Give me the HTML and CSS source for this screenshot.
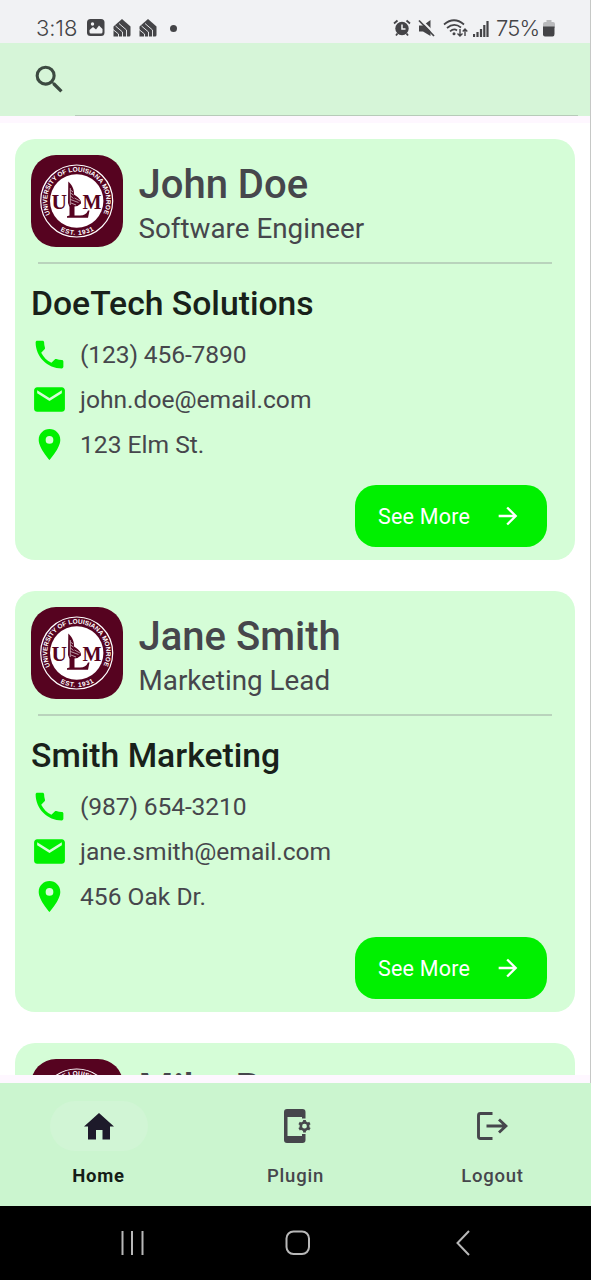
FILE: index.html
```html
<!DOCTYPE html>
<html lang="en">
<head>
<meta charset="utf-8">
<title>Contacts</title>
<link rel="stylesheet" href="styles.css">
</head>
<body>
<svg class="defs" width="0" height="0" aria-hidden="true">
  <symbol id="phone" viewBox="0 0 24 24"><path d="M6.62 10.79c1.44 2.83 3.76 5.14 6.59 6.59l2.2-2.2c.27-.27.67-.36 1.02-.24 1.12.37 2.33.57 3.57.57.55 0 1 .45 1 1V20c0 .55-.45 1-1 1-9.39 0-17-7.61-17-17 0-.55.45-1 1-1h3.500c.55 0 1 .45 1 1 0 1.250.2 2.450.57 3.570.11.35.03.74-.25 1.020l-2.200 2.200z"/></symbol>
  <symbol id="mail" viewBox="0 0 24 24"><path d="M20 4H4c-1.100 0-1.990.9-1.990 2L2 18c0 1.100.9 2 2 2h16c1.100 0 2-.9 2-2V6c0-1.100-.9-2-2-2zm0 4l-8 5-8-5V6l8 5 8-5v2z"/></symbol>
  <symbol id="pin" viewBox="0 0 24 24"><path d="M12 2C8.130 2 5 5.130 5 9c0 5.250 7 13 7 13s7-7.750 7-13c0-3.870-3.130-7-7-7zm0 9.500a2.500 2.500 0 0 1 0-5 2.500 2.500 0 0 1 0 5z"/></symbol>
  <symbol id="arrow" viewBox="0 0 24 24"><path d="M12 4l-1.410 1.410L16.170 11H4v2h12.170l-5.580 5.590L12 20l8-8z"/></symbol>
  <symbol id="tagged-house" viewBox="0 0 18 18"><path fill="#444447" d="M.5 7.500 9 0l8.500 7.500V16q0 1.500-1.500 1.500H.5z"/><path d="M6 4.500 13.500 11v7M2.500 7 9.500 13v5M0 10.500 5.500 15v3" fill="none" stroke="#f1f2f4" stroke-width=".9"/></symbol>
  <symbol id="seal" viewBox="0 0 92 92">
    <rect width="92" height="92" rx="25" fill="#560320"/>
    <circle cx="45.700" cy="46" r="36" fill="none" stroke="#fff" stroke-width="1.200"/>
    <circle cx="45.700" cy="46" r="26.700" fill="#fff"/>
    <path id="arc-top" fill="none" d="M19.400 59.400A29.500 29.500 0 1 1 72 59.400"/>
    <path id="arc-bottom" fill="none" d="M27.500 74.700A34 34 0 0 0 63.900 74.700"/>
    <text class="seal-ring"><textPath href="#arc-top" textLength="119">UNIVERSITY OF LOUISIANA MONROE</textPath></text>
    <text class="seal-ring"><textPath href="#arc-bottom" startOffset="2" textLength="35">EST. 1931</textPath></text>
    <text class="seal-letter" x="20.500" y="53.700" textLength="15.500" lengthAdjust="spacingAndGlyphs">U</text>
    <text class="seal-letter" x="51.500" y="53.700" textLength="19" lengthAdjust="spacingAndGlyphs">M</text>
    <path fill="#560320" d="M37.300 26.500C41.500 30 43.300 35 43 39.500C47 42 50.500 45 50 48.500L46.500 51L43.500 51.500V60.500H49Q55 60.500 57 55.500H58.500L57 62.700H36V61.200L38.500 60.500V52L37 48Z"/>
    <path d="M39.300 33V50M39.500 35l2.500 2M39.500 38l3 2M39.500 41l3 2.500M39.500 44.500l8 3M43.500 43l5.500 3M40 48l5 2" fill="none" stroke="#fff" stroke-width=".6"/>
  </symbol>
</svg>

<div class="screen">
  <header class="status">
    <div class="status-left">
      <span class="clock">3:18</span>
      <svg width="18" height="18" viewBox="0 0 18 18"><rect width="17.500" height="17" rx="3.500" fill="#444447"/><path d="M2.500 13V11L6 8l3 2.500 3-4 3.500 3.500V13q0 1.500-1.500 1.500H4q-1.500 0-1.500-1.500z" fill="#f1f2f4"/><circle cx="5.500" cy="5" r="1.700" fill="#f1f2f4"/></svg>
      <svg class="house-a" width="18" height="18"><use href="#tagged-house"/></svg>
      <svg class="house-b" width="18" height="18"><use href="#tagged-house"/></svg>
      <i class="dot"></i>
    </div>
    <div class="status-right">
      <svg class="alarm" width="18" height="18" viewBox="0 0 18 18"><circle cx="9" cy="9.500" r="6.700" fill="#444447"/><path d="M1 4.500 4.500 1.500M17 4.500 13.500 1.500M4.500 14.500l-1.500 2M13.500 14.500l1.500 2" stroke="#444447" stroke-width="1.800" fill="none"/><path d="M9 5.500V10h3.500" fill="none" stroke="#f1f2f4" stroke-width="1.500"/></svg>
      <svg class="mute" width="18" height="18" viewBox="0 0 18 18"><path d="M1 6.500h4L12.500 1v16L5 12.500H1z" fill="#444447"/><path d="M3 1 18 16" stroke="#f1f2f4" stroke-width="2"/><path d="M1 1.500 16 17" stroke="#444447" stroke-width="1.700"/></svg>
      <svg class="wifi" width="26" height="19" viewBox="0 0 26 19"><g fill="none" stroke="#444447" stroke-width="1.700"><path d="M1 5.500Q11 -3 21 5.500M4 9Q11 3 18 8.500M7 12.300Q11 9 14 11.500"/><path d="M17 10v7M14.500 14.500 17 17l2.500-2.500M22 17v-7M19.700 12.500 22 10l2.300 2.500" stroke-width="1.400"/></g><circle cx="11" cy="14.700" r="1.500" fill="#444447"/></svg>
      <svg class="signal" width="16" height="17" viewBox="0 0 16 17"><path d="M1 17v-3M4.500 17v-5M8 17V9M11.300 17V5M14.500 17V1" stroke="#444447" stroke-width="2.200"/></svg>
      <span class="percent">75%</span>
      <svg class="battery" width="12" height="17" viewBox="0 0 12 17"><path d="M0 4q0-2 2-2h1.500V0h5v2H10q2 0 2 2v4H0z" fill="#b9babc"/><path d="M0 6.500h11.500V14q0 2.500-2 2.500h-7.500q-2 0-2-2z" fill="#444447"/></svg>
    </div>
  </header>

  <div class="search">
    <svg width="37" height="37" viewBox="0 0 24 24"><path fill="#3c4a41" d="M15.500 14h-.79l-.28-.27A6.471 6.471 0 0 0 16 9.500 6.500 6.500 0 1 0 9.500 16c1.610 0 3.090-.59 4.230-1.570l.27.28v.79l5 4.990L20.490 19l-4.990-5zm-6 0a4.500 4.500 0 1 1 0-9 4.500 4.500 0 0 1 0 9z"/></svg>
    <div class="search-field"></div>
  </div>

  <main class="list">
    <article class="card">
      <div class="person">
        <svg class="avatar"><use href="#seal"/></svg>
        <div><h2 class="name">John Doe</h2><p class="role">Software Engineer</p></div>
      </div>
      <hr class="rule">
      <h3 class="company">DoeTech Solutions</h3>
      <ul class="contact">
        <li><svg><use href="#phone"/></svg><span class="number">(123) 456-7890</span></li>
        <li><svg><use href="#mail"/></svg><span>john.doe@email.com</span></li>
        <li><svg><use href="#pin"/></svg><span>123 Elm St.</span></li>
      </ul>
      <button class="more"><span>See More</span><svg><use href="#arrow"/></svg></button>
    </article>

    <article class="card">
      <div class="person">
        <svg class="avatar"><use href="#seal"/></svg>
        <div><h2 class="name">Jane Smith</h2><p class="role">Marketing Lead</p></div>
      </div>
      <hr class="rule">
      <h3 class="company">Smith Marketing</h3>
      <ul class="contact">
        <li><svg><use href="#phone"/></svg><span class="number">(987) 654-3210</span></li>
        <li><svg><use href="#mail"/></svg><span>jane.smith@email.com</span></li>
        <li><svg><use href="#pin"/></svg><span>456 Oak Dr.</span></li>
      </ul>
      <button class="more"><span>See More</span><svg><use href="#arrow"/></svg></button>
    </article>

    <article class="card">
      <div class="person">
        <svg class="avatar"><use href="#seal"/></svg>
        <div><h2 class="name">Mike B</h2></div>
      </div>
    </article>
  </main>

  <nav class="tabs">
    <div class="tab active">
      <span class="pill"><svg width="30" height="27" viewBox="0 0 30 27"><path d="M15 0 30 13.500H26V26.500H18.500V17H12V26.500H4V13.500H0Z"/></svg></span>
      <span class="tab-label">Home</span>
    </div>
    <div class="tab">
      <span class="pill"><svg class="plugin" width="29" height="34" viewBox="0 0 29 34"><path fill-rule="evenodd" d="M3 0H18.500Q21.500 0 21.500 3V9.500H18V8H3.500V27H18V25H21.500V31Q21.500 34 18.500 34H3Q0 34 0 31V3Q0 0 3 0Z"/><circle cx="20.500" cy="17.200" r="3.700" fill="none" stroke="#46464c" stroke-width="2.600"/><path d="M20.500 11v2.500M20.500 21v2.500M15.100 14.100l2.200 1.200M23.700 19l2.200 1.300M15.100 20.300l2.200-1.300M23.700 15.300l2.200-1.200" stroke="#46464c" stroke-width="2.800"/></svg></span>
      <span class="tab-label">Plugin</span>
    </div>
    <div class="tab">
      <span class="pill"><svg width="31" height="28" viewBox="0 0 31 28"><path d="M15.500 1.500H3.500Q1.500 1.500 1.500 3.500V24.500Q1.500 26.500 3.500 26.500H15.500M9.500 14H29M22 7.500 29 14 22 20.500" fill="none" stroke="#46464c" stroke-width="2.900"/></svg></span>
      <span class="tab-label">Logout</span>
    </div>
  </nav>

  <footer class="system">
    <svg width="24" height="24" viewBox="0 0 24 24"><path d="M2.500 0V24M12 0V24M22.500 0V24"/></svg>
    <svg class="home-key" width="26" height="26" viewBox="0 0 26 26"><rect x="1.500" y="1.500" width="22.500" height="22.500" rx="7"/></svg>
    <svg class="back-key" width="14" height="26" viewBox="0 0 14 26"><path d="M13 1 1.500 13 13 25"/></svg>
  </footer>
</div>
</body>
</html>
```
FILE: styles.css
```css
* { box-sizing: border-box; margin: 0; padding: 0; }

body {
  width: 591px;
  height: 1280px;
  overflow: hidden;
  font-family: Roboto, "Liberation Sans", sans-serif;
  color: #46464c;
}

svg { display: block; flex: none; }
.defs { position: absolute; }

.screen {
  display: flex;
  flex-direction: column;
  width: 591px;
  height: 1280px;
  background: #fef7ff;
  border-right: 1px solid #c6c8c6;
}

/* Status bar */
.status {
  display: flex;
  flex: none;
  justify-content: space-between;
  height: 43px;
  padding: 15px 35px 0 36px;
  background: #f1f2f4;
  color: #444447;
}
.status-left, .status-right { display: flex; align-items: center; height: 26px; }
.clock, .percent { font-family: Inter, sans-serif; font-size: 22px; line-height: 26px; font-weight: 300; }
.clock { width: 51px; letter-spacing: -.1px; }
.house-a, .house-b { margin-left: 8px; }
.dot { width: 7px; height: 7px; margin-left: 13px; border-radius: 50%; background: #444447; }
.mute { margin-left: 7px; }
.wifi { margin-left: 7px; }
.signal { margin-left: 4px; }
.percent { width: 43px; margin-left: 7px; letter-spacing: -.8px; }
.battery { margin-left: 4px; }

/* Search bar */
.search {
  display: flex;
  flex: none;
  align-items: center;
  height: 73px;
  padding: 0 12px 0 31px;
  background: #d6f5d8;
}
.search-field { flex: 1; align-self: stretch; margin-left: 7px; border-bottom: 1px solid #b7cbb9; }

/* Card list */
.list {
  display: flex;
  flex-direction: column;
  flex: none;
  gap: 31px;
  height: 952px;
  margin-top: 7px;
  padding: 16px 15px 0;
  overflow: hidden;
  background: #fff;
}
.card {
  display: flex;
  flex: none;
  flex-direction: column;
  height: 421px;
  padding: 16px 16px 13px;
  border-radius: 20px;
  background: #d5fdd7;
}
.person { display: flex; gap: 15.500px; height: 92px; }
.avatar { width: 92px; height: 92px; }
.seal-ring { font: 700 6.500px "Liberation Sans", sans-serif; fill: #fff; }
.seal-letter { font: 700 21.500px "Liberation Serif", serif; fill: #560320; }
.name { padding-top: 7px; font-size: 40px; font-weight: 500; line-height: 46px; white-space: nowrap; }
.role { margin-top: 5px; font-size: 27.800px; line-height: 32px; white-space: nowrap; }
.rule { flex: none; height: 2px; margin: 15px 7px 0; border: 0; background: #b9d3bc; }
.company { margin-top: 18px; font-size: 33.700px; font-weight: 500; line-height: 44px; color: #18211a; white-space: nowrap; }
.contact { margin-top: 6px; list-style: none; }
.contact li { display: flex; align-items: center; gap: 12.500px; height: 45px; font-size: 24.600px; white-space: nowrap; }
.contact .number { letter-spacing: -.12px; }
.contact svg { width: 37px; height: 37px; margin-left: -.5px; fill: #00f000; }
.more {
  display: flex;
  align-items: center;
  align-self: flex-end;
  justify-content: space-between;
  width: 192px;
  height: 62px;
  margin-top: auto;
  margin-right: 12px;
  padding: 0 25px 0 23px;
  border: 0;
  border-radius: 21px;
  background: #00f000;
  color: #fff;
  font: 400 21.500px Roboto, sans-serif;
  letter-spacing: .2px;
}
.more span { padding-top: 1px; }
.more svg { width: 28px; height: 28px; fill: #fff; }

/* Tabs */
.tabs {
  display: grid;
  flex: none;
  grid-template-columns: repeat(3, 1fr);
  width: 591px;
  height: 123px;
  margin-top: 8px;
  padding-top: 18px;
  background: #cbf5cf;
}
.tab { display: flex; flex-direction: column; align-items: center; fill: #46464c; }
.pill { display: flex; align-items: center; justify-content: center; width: 98px; height: 50px; border-radius: 25px; }
.active .pill { background: #d1f5d5; fill: #1d1a2a; }
.tab-label { margin-top: 14px; font-size: 18.500px; font-weight: 500; line-height: 22px; letter-spacing: .77px; }
.active .tab-label { color: #151d17; font-weight: 700; }
.plugin { margin-left: 6px; }

/* System navigation */
.system {
  display: flex;
  flex: none;
  align-items: center;
  width: 591px;
  height: 74px;
  padding-left: 120px;
  background: #000;
}
.system svg { fill: none; stroke: #b8b8b8; stroke-width: 2; }
.home-key { margin-left: 141px; }
.back-key { margin-left: 145px; }
```
